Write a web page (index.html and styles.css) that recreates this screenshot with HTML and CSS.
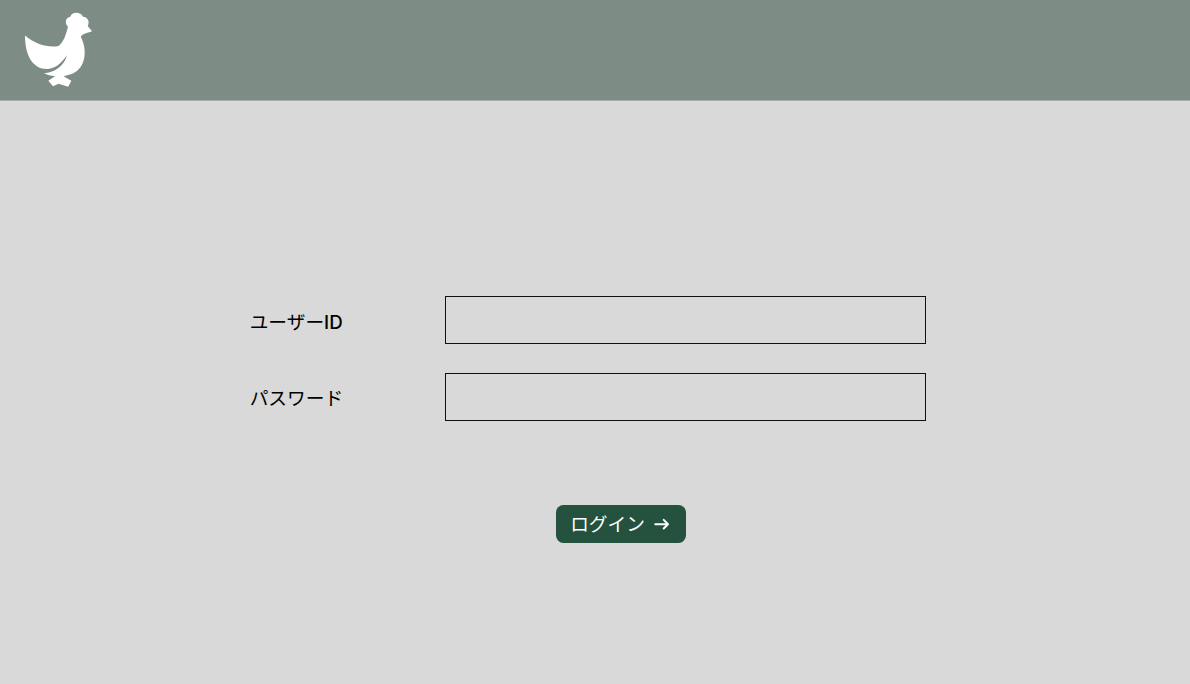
FILE: index.html
```html
<!DOCTYPE html>
<html lang="ja">
<head>
<meta charset="utf-8">
<title>ログイン</title>
<link rel="stylesheet" href="styles.css">
</head>
<body>
<header class="header">
  <svg class="logo" viewBox="0 0 90 100" aria-label="ロゴ">
    <path d="M10 30.5C20 39 33 43 43.5 41C49 37 51 29 53 21.7C49 18 51 12.2 55.3 11.8C56.5 6.5 66 6.5 68 11.8C73 12 75 17 72.7 21L77 26.2C72 28 66.5 29 65.8 32C73 45 71 66 54 69.8L48.5 71.2L56.4 75.7L53.2 81.8L43.5 78.7L38 81.2L33.3 75.7L40 71.3C36 70.8 32 70 29 68.3C39 67.5 49 62 52 50C46 59 39 64 32 64C18 64 10 51 10 30.5Z"/>
  </svg>
</header>
<main class="main">
  <form class="form">
    <div class="row">
      <label class="label" for="user">ユーザー<span class="latin">ID</span></label>
      <input class="input" id="user" type="text">
    </div>
    <div class="row">
      <label class="label" for="password">パスワード</label>
      <input class="input" id="password" type="password">
    </div>
    <button class="button" type="button">
      <span class="button-text">ログイン</span>
      <svg class="arrow" viewBox="0 0 16 14"><path d="M1.3 7.2H14M9.7 2.9L14 7.2L9.7 11.5"/></svg>
    </button>
  </form>
</main>
</body>
</html>
```
FILE: styles.css
```css
* { box-sizing: border-box; }
body {
  margin: 0;
  min-height: 684px;
  background: #d9d9d9;
  color: #000;
  font-family: Inter, "Noto Sans CJK JP", sans-serif;
  font-size: 18.7px;
}
.header {
  height: 101px;
  padding: 5px 15px 0;
  border-bottom: 1px solid #a6aea9;
  background: #7d8c84;
  overflow: hidden;
}
.logo {
  display: block;
  width: 90px;
  height: 100px;
  fill: #fff;
}
.main { padding: 195px 264px 0 249.7px; }
.form {
  display: flex;
  flex-direction: column;
}
.row {
  display: flex;
  align-items: center;
  justify-content: space-between;
  height: 48px;
  margin-bottom: 29px;
}
.row + .row { margin-bottom: 84px; }
.label {
  padding-top: 5px;
  line-height: 28px;
  white-space: nowrap;
}
.row + .row .label { padding-top: 4px; }
.latin { font-weight: 500; }
.input {
  width: 481.5px;
  height: 48px;
  margin: 0;
  padding: 0 12px;
  border: 1px solid #111;
  border-radius: 0;
  background: transparent;
  font: inherit;
  outline: none;
}
.row + .row .input {
  height: 47.5px;
}
.button {
  display: flex;
  align-items: center;
  gap: 9px;
  width: 130px;
  height: 38px;
  margin: 0 0 0 306px;
  padding: 0 0 0 14.5px;
  border: 0;
  border-radius: 7.5px;
  background: #24523f;
  color: #fff;
  font: inherit;
  line-height: 28px;
  white-space: nowrap;
}
.button-text { padding-top: 1px; }
.arrow {
  flex: none;
  width: 16px;
  height: 14px;
  fill: none;
  stroke: #fff;
  stroke-width: 2;
  stroke-linecap: round;
  stroke-linejoin: round;
}
```
